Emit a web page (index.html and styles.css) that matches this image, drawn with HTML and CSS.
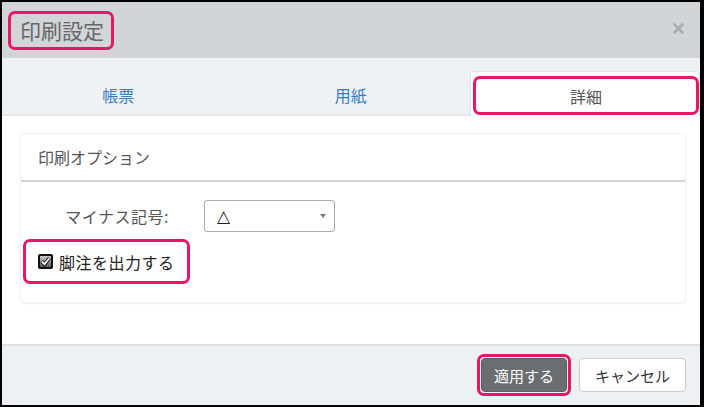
FILE: index.html
```html
<!DOCTYPE html>
<html lang="ja">
<head>
<meta charset="utf-8">
<link rel="stylesheet" href="styles.css">
</head>
<body>
<div class="dialog">
  <div class="header">
    <span class="title mark">印刷設定</span>
    <svg class="close" width="11" height="11" viewBox="0 0 11 11"><path d="M1.5 1.5 L9.5 9.5 M9.5 1.5 L1.5 9.5" stroke="#a9adb1" stroke-width="2.6" stroke-linecap="round"/></svg>
  </div>
  <div class="tabs">
    <div class="tab">帳票</div>
    <div class="tab">用紙</div>
    <div class="tab active"><div class="tab-inner mark">詳細</div></div>
  </div>
  <div class="content">
    <div class="panel">
      <div class="panel-head">印刷オプション</div>
      <div class="panel-body">
        <div class="row">
          <label class="label">マイナス記号:</label>
          <div class="select"><span class="tri">△</span><span class="caret"></span></div>
        </div>
        <div class="check mark">
          <span class="box"><svg width="11" height="11" viewBox="0 0 11 11"><path d="M1.6 5.6 L4.4 8.4 L9.4 2.2" stroke="#111" stroke-width="3.6" fill="none"/><path d="M1.8 5.6 L4.4 8.2 L9.2 2.4" stroke="#fff" stroke-width="1.8" fill="none"/></svg></span>
          <span class="check-text">脚注を出力する</span>
        </div>
      </div>
    </div>
  </div>
  <div class="footer">
    <div class="apply-wrap mark"><button class="btn apply">適用する</button></div>
    <button class="btn cancel">キャンセル</button>
  </div>
</div>
</body>
</html>
```
FILE: styles.css
```css
html, body {
  margin: 0;
  padding: 0;
  background: #000;
  width: 704px;
  height: 407px;
  overflow: hidden;
}
body {
  font-family: "Noto Sans CJK JP", "Noto Sans", sans-serif;
}
.dialog {
  margin: 2px 0 0 2px;
  width: 698px;
  height: 403px;
  background: #fff;
  display: flex;
  flex-direction: column;
}
.mark {
  border: 3px solid #e8166a;
  border-radius: 7px;
  box-sizing: border-box;
}
.header {
  height: 56px;
  background: #d1d5d8;
  display: flex;
  align-items: center;
  justify-content: space-between;
  padding: 0 16px 0 6px;
  box-sizing: border-box;
}
.title {
  height: 39px;
  padding: 0 7px 0 9px;
  font-size: 21px;
  color: #666;
  display: flex;
  align-items: center;
  line-height: 1;
  margin-top: 1px;
}
.close {
  margin-top: -4px;
}
.tabs {
  height: 58px;
  background: #eef2f5;
  display: flex;
  align-items: flex-end;
  padding-top: 13px;
  box-sizing: border-box;
  border-bottom: 2px solid #e3e6e9;
}
.tab {
  flex: 1;
  height: 44px;
  display: flex;
  align-items: center;
  justify-content: center;
  font-size: 16px;
  color: #3a7cc0;
  padding-top: 5px;
  box-sizing: border-box;
}
.tab.active {
  flex: 0 0 230px;
  margin-left: 3px;
  height: 45px;
  margin-bottom: -2px;
  background: #fff;
  border: 1px solid #dfe3e6;
  border-bottom: none;
  border-radius: 4px 4px 0 0;
  padding: 4px 0 1px 2px;
  align-items: stretch;
  justify-content: stretch;
}
.tab-inner {
  flex: 1;
  display: flex;
  align-items: center;
  justify-content: center;
  color: #555;
  font-size: 16px;
}
.content {
  flex: 1;
  padding: 17px 14px 0 18px;
  border-bottom: 2px solid #dcdfe2;
}
.panel {
  height: 170px;
  box-sizing: border-box;
  border-radius: 4px;
  box-shadow: 0 1px 2px rgba(0,0,0,0.06);
  border: 1px solid #f2f2f2;
}
.panel-head {
  height: 46px;
  border-bottom: 2px solid #d4d4d4;
  padding-left: 17px;
  display: flex;
  align-items: center;
  font-size: 16px;
  color: #555;
}
.panel-body {
  padding: 18px 0 0 2px;
}
.row {
  display: flex;
  align-items: center;
  height: 32px;
}
.label {
  width: 146px;
  text-align: right;
  font-size: 16px;
  color: #555;
  margin-right: 35px;
  letter-spacing: 0.5px;
}
.select {
  width: 131px;
  height: 32px;
  box-sizing: border-box;
  border: 1px solid #aaa;
  border-radius: 3px;
  display: flex;
  align-items: center;
  justify-content: space-between;
  padding: 0 8px 0 12px;
  color: #222;
}
.tri {
  font-size: 17px;
  font-family: "DejaVu Sans", sans-serif;
  line-height: 1;
}
.caret {
  width: 0;
  height: 0;
  border-left: 3px solid transparent;
  border-right: 3px solid transparent;
  border-top: 4px solid #777;
}
.check {
  margin-top: 7px;
  width: 167px;
  height: 45px;
  display: flex;
  align-items: center;
  padding-left: 12px;
}
.box {
  width: 15px;
  height: 15px;
  box-sizing: border-box;
  background: linear-gradient(#c8c8c8, #5a5a5a);
  border: 2px solid #111;
  border-radius: 2px;
  display: flex;
  align-items: center;
  justify-content: center;
  margin-right: 6px;
}
.check-text {
  font-size: 16px;
  color: #222;
  letter-spacing: 0.5px;
}
.footer {
  height: 59px;
  background: #eef1f4;
  display: flex;
  align-items: center;
  justify-content: flex-end;
  padding-right: 14px;
  padding-bottom: 1px;
  box-sizing: border-box;
}
.apply-wrap {
  padding: 1px;
  margin-right: 8px;
}
.btn {
  font-family: "Noto Sans CJK JP", "Noto Sans", sans-serif;
  border-radius: 4px;
  height: 34px;
  font-size: 15px;
  cursor: pointer;
}
.apply {
  width: 86px;
  background: #6b6e71;
  color: #fff;
  border: 1px solid #5d6063;
  display: block;
}
.cancel {
  width: 107px;
  background: #fff;
  color: #333;
  border: 1px solid #ccc;
  font-size: 15px;
}
```
